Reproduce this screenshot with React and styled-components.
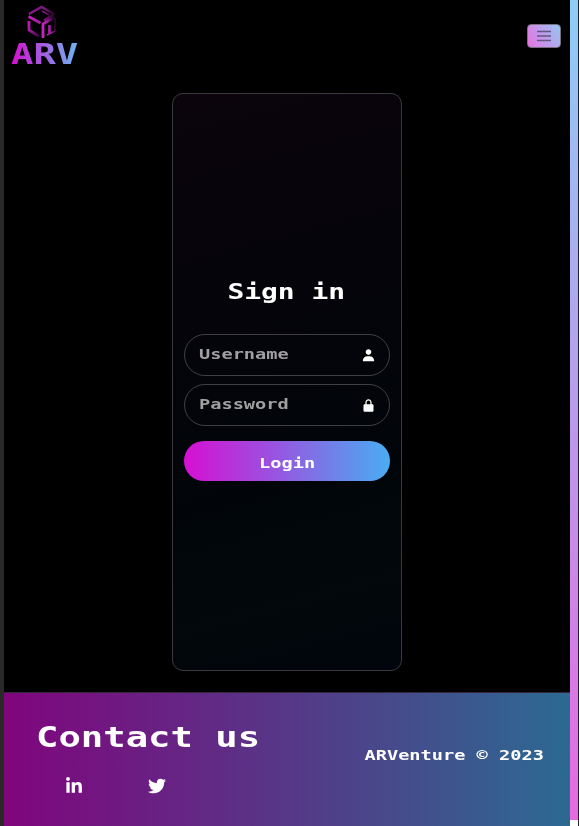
import React from 'react';
import styled, { createGlobalStyle } from 'styled-components';
import { BiSolidUser, BiSolidLockAlt } from 'react-icons/bi';
import { FaLinkedinIn, FaTwitter } from 'react-icons/fa';

const GlobalStyle = createGlobalStyle`
  * { box-sizing: border-box; }
  body { margin: 0; background: #000; overflow: hidden; }
  button, input { font: inherit; }
`;

const Frame = styled.div`
  display: grid;
  grid-template-columns: 4px 566px 8px 1px;
  height: 826px;
  color: #fff;
  font-family: 'DejaVu Sans Mono', 'Liberation Mono', monospace;
  font-weight: 700;
`;

const LeftEdge = styled.div`
  background: #292929;
`;

const Page = styled.div`
  display: flex;
  flex-direction: column;
  background: #000;
`;

const ScrollTrack = styled.div`
  background: #fff;
`;

const ScrollThumb = styled.div`
  height: 820px;
  background: linear-gradient(to top, #e66ae0, #8ecdf6);
`;

const RightEdge = styled.div`
  background: #202024;
`;

const WideText = styled.span`
  display: block;
  white-space: pre;
  font-size: ${(p) => p.$size}px;
  line-height: ${(p) => p.$size}px;
  transform: scaleX(1.33);
  transform-origin: ${(p) => p.$origin || 'left'} center;
`;

const Navbar = styled.header`
  display: flex;
  justify-content: space-between;
  height: 93px;
  padding: 5px 9px 0 8px;
`;

const Brand = styled.div`
  display: flex;
  flex-direction: column;
  width: 68px;
`;

const Cube = styled.svg`
  width: 30px;
  height: 35px;
  margin-left: 15px;
`;

const BrandName = styled(WideText)`
  width: 51px;
  margin-top: 1px;
  margin-left: -1px;
  background: linear-gradient(90deg, #d60dd0, #6bb9f3);
  background-clip: text;
  -webkit-background-clip: text;
  color: transparent;
`;

const MenuButton = styled.button`
  display: grid;
  place-items: center;
  width: 34px;
  height: 24px;
  margin-top: 19px;
  padding: 0;
  border: 1px solid #777080;
  border-radius: 4px;
  background: linear-gradient(60deg, #e873e3, #94c6f3);
`;

const MenuLines = styled.svg`
  width: 14px;
  height: 12px;
`;

const Card = styled.form`
  display: flex;
  flex-direction: column;
  width: 229.5px;
  height: 578px;
  margin: 0 0 0 168px;
  padding: 188px 11px 0;
  border: 1px solid #3a3a3c;
  border-radius: 11px;
  background: linear-gradient(165deg, #0b040c 0%, #04040a 38%, #010509 66%, #02080b 85%, #01040c 100%);
`;

const Title = styled.h1`
  display: flex;
  justify-content: center;
  margin: 0 0 31px;
  font-size: 21px;
`;

const Field = styled.label`
  display: flex;
  align-items: center;
  justify-content: space-between;
  height: 42px;
  margin-bottom: 8px;
  padding: 0 13px 2px 14px;
  border: 1px solid #404044;
  border-radius: 21px;
  color: #a0a0a0;
  svg { color: #fff; margin-top: 2px; }
`;

const LoginButton = styled.button`
  display: flex;
  align-items: center;
  justify-content: center;
  height: 40px;
  margin-top: 7px;
  padding: 3px 0 0;
  border: 0;
  border-radius: 20px;
  color: #fff;
  background: linear-gradient(90deg, #d60fd2, #49adf2);
`;

const Footer = styled.footer`
  display: flex;
  justify-content: space-between;
  height: 134px;
  margin-top: 21px;
  padding: 31px 26px 0 32px;
  border-top: 1px solid #35263c;
  background: linear-gradient(90deg, #80057d, #2c6a92);
`;

const Socials = styled.nav`
  display: flex;
  gap: 65px;
  margin: 25px 0 0 29px;
`;

const Copyright = styled.div`
  padding-top: 24px;
`;

export default function App() {
  return (
    <>
      <GlobalStyle />
      <Frame>
        <LeftEdge />
        <Page>
          <Navbar>
            <Brand>
              <Cube viewBox="0 0 30 35" fill="none">
                <defs>
                  <linearGradient id="top" x1="2" y1="9" x2="28" y2="9" gradientUnits="userSpaceOnUse">
                    <stop stopColor="#8b1788" />
                    <stop offset=".6" stopColor="#7a167a" />
                    <stop offset="1" stopColor="#180318" />
                  </linearGradient>
                  <linearGradient id="left" x1="2" y1="12" x2="13" y2="33" gradientUnits="userSpaceOnUse">
                    <stop stopColor="#c51fc2" />
                    <stop offset=".5" stopColor="#a51aa2" />
                    <stop offset="1" stopColor="#240424" />
                  </linearGradient>
                  <linearGradient id="right" x1="16" y1="24" x2="28" y2="20" gradientUnits="userSpaceOnUse">
                    <stop stopColor="#c823c6" />
                    <stop offset=".55" stopColor="#a01c9e" />
                    <stop offset="1" stopColor="#2b062b" />
                  </linearGradient>
                </defs>
                <g stroke="url(#top)" strokeWidth="2.5">
                  <path d="M2 9 14.5 2 27 9l-10 6.5" />
                  <path d="m15 6 7 4" strokeWidth="2" />
                </g>
                <g stroke="url(#left)" strokeWidth="2.8">
                  <path d="m1.5 11.5 12 6.5" />
                  <path d="M2 16v9l10 6.5" />
                </g>
                <g stroke="url(#right)" strokeWidth="2.8">
                  <path d="M16 33V19l11.5-7" />
                  <path d="M28 13v13l-8 4" strokeWidth="1.5" />
                  <path d="M22.5 20v8" />
                </g>
              </Cube>
              <BrandName $size={28}>ARV</BrandName>
            </Brand>
            <MenuButton aria-label="Menu">
              <MenuLines viewBox="0 0 14 12" stroke="#645781" strokeWidth="1.5">
                <path d="M0 1.5h14M0 6h14M0 10.5h14" />
              </MenuLines>
            </MenuButton>
          </Navbar>
          <Card>
            <Title><WideText $size={21} $origin="center">Sign in</WideText></Title>
            <Field>
              <WideText $size={14}>Username</WideText>
              <BiSolidUser size={15} />
            </Field>
            <Field>
              <WideText $size={14}>Password</WideText>
              <BiSolidLockAlt size={15} />
            </Field>
            <LoginButton type="button">
              <WideText $size={14} $origin="center">Login</WideText>
            </LoginButton>
          </Card>
          <Footer>
            <div>
              <WideText $size={28}>Contact us</WideText>
              <Socials>
                <FaLinkedinIn size={18} />
                <FaTwitter size={18} />
              </Socials>
            </div>
            <Copyright><WideText $size={14} $origin="right">ARVenture © 2023</WideText></Copyright>
          </Footer>
        </Page>
        <ScrollTrack><ScrollThumb /></ScrollTrack>
        <RightEdge />
      </Frame>
    </>
  );
}
